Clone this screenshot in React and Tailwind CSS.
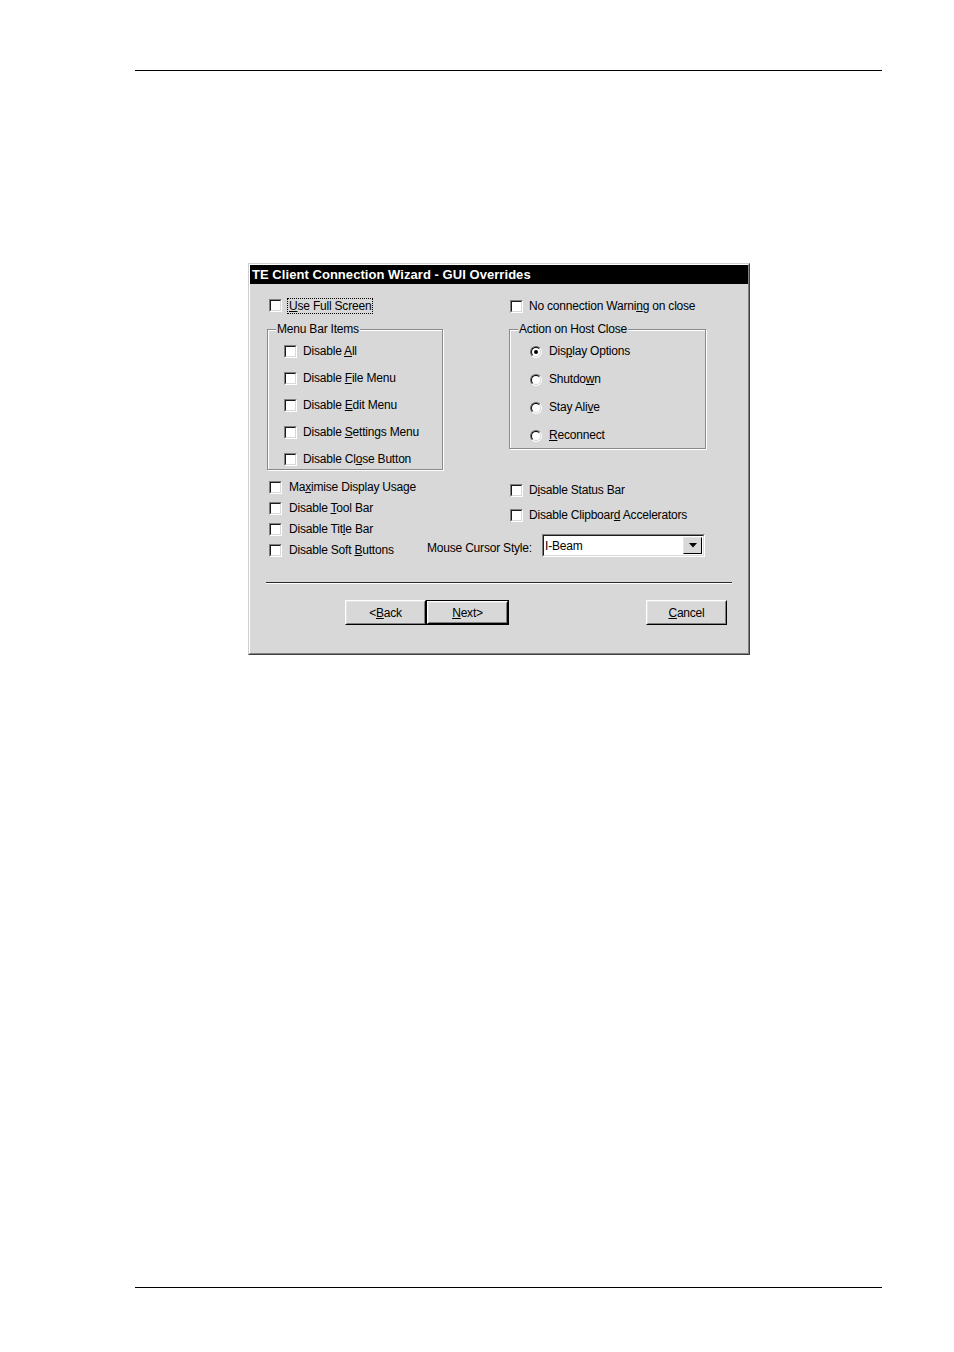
import React from "react";

// * small win95 style pieces
const M = ({ children }) => (
  <span className="underline underline-offset-[1px] decoration-1">{children}</span>
);

const Box = () => (
  <span className="block w-[13px] h-[13px] shrink-0 border border-t-[#808080] border-l-[#808080] border-r-white border-b-white">
    <span className="block w-full h-full border border-t-[#1a1a1a] border-l-[#1a1a1a] border-r-[#d8d8d8] border-b-[#d8d8d8] bg-white" />
  </span>
);

const Radio = ({ checked }) => (
  <span className="flex items-center justify-center w-[12px] h-[12px] shrink-0 rounded-full border border-t-[#6a6a6a] border-l-[#6a6a6a] border-r-white border-b-white">
    <span className="flex items-center justify-center w-full h-full rounded-full border border-t-[#000] border-l-[#000] border-r-[#d8d8d8] border-b-[#d8d8d8] bg-white">
      {checked && <span className="block w-[4px] h-[4px] rounded-full bg-black" />}
    </span>
  </span>
);

const Check = ({ children, gap = "ml-[7px]" }) => (
  <div className="flex items-center h-[13px]">
    <Box />
    <span className={`${gap} leading-[13px] whitespace-nowrap`}>{children}</span>
  </div>
);

const Option = ({ children, checked }) => (
  <div className="flex items-center h-[13px]">
    <Radio checked={checked} />
    <span className="ml-[7px] leading-[13px] whitespace-nowrap">{children}</span>
  </div>
);

const Group = ({ title, className, children }) => (
  <div
    className={`relative border border-[#8a8a8a] shadow-[inset_1px_1px_0_white,1px_1px_0_white] ${className}`}
  >
    <span className="absolute -top-[8px] left-[8px] px-px bg-[#d8d8d8] leading-[14px] whitespace-nowrap">
      {title}
    </span>
    {children}
  </div>
);

const Button = ({ children, isDefault, className = "" }) => (
  <div className={`h-[25px] ${isDefault ? "border border-black" : ""} ${className}`}>
    <div className="h-full border border-t-white border-l-white border-r-black border-b-black">
      <div className="h-full flex items-center justify-center border border-t-[#e4e4e4] border-l-[#e4e4e4] border-r-[#808080] border-b-[#808080]">
        <span className="leading-none">{children}</span>
      </div>
    </div>
  </div>
);

const App = () => {
  return (
    <div className="w-[954px] h-[1352px] bg-white pt-[70px] font-['Liberation_Sans',Arial,sans-serif] text-[12px] tracking-[-0.2px] text-black">
      {/* page rule top */}
      <div className="ml-[135px] w-[747px] h-px bg-black" />

      {/* dialog */}
      <div className="mt-[192px] ml-[248px] w-[502px] h-[392px] border border-t-[#cfcfcf] border-l-[#cfcfcf] border-r-[#404040] border-b-[#404040]">
        <div className="h-full flex flex-col border border-t-white border-l-white border-r-[#808080] border-b-[#808080]">
          {/* title */}
          <div className="h-[19px] shrink-0 bg-black flex items-center pl-[2px]">
            <span className="text-white font-bold text-[13px] tracking-[0.05px] leading-none whitespace-nowrap">
              TE Client Connection Wizard - GUI Overrides
            </span>
          </div>

          {/* body */}
          <div className="flex-1 bg-[#d8d8d8]">
            {/* top part */}
            <div className="flex items-start">
              <div className="ml-[17px] w-[176px]">
                <div className="mt-[15px] pl-[2px]">
                  <div className="flex items-center h-[13px]">
                    <Box />
                    <span className="ml-[5px] px-px border border-dotted border-black leading-[14px] whitespace-nowrap">
                      <M>U</M>se Full Screen
                    </span>
                  </div>
                </div>
                <Group title="Menu Bar Items" className="mt-[17px] h-[141px]">
                  <div className="pt-[15px] pl-[16px] flex flex-col gap-[14px]">
                    <Check gap="ml-[6px]">
                      Disable <M>A</M>ll
                    </Check>
                    <Check gap="ml-[6px]">
                      Disable <M>F</M>ile Menu
                    </Check>
                    <Check gap="ml-[6px]">
                      Disable <M>E</M>dit Menu
                    </Check>
                    <Check gap="ml-[6px]">
                      Disable <M>S</M>ettings Menu
                    </Check>
                    <Check gap="ml-[6px]">
                      Disable Cl<M>o</M>se Button
                    </Check>
                  </div>
                </Group>
              </div>

              <div className="ml-[66px] w-[197px]">
                <div className="mt-[16px] pl-[1px]">
                  <Check gap="ml-[6px]">
                    No connection Warni<M>n</M>g on close
                  </Check>
                </div>
                <Group title="Action on Host Close" className="mt-[16px] h-[120px]">
                  <div className="pt-[15px] pl-[20px] flex flex-col gap-[15px]">
                    <Option checked>
                      Dis<M>p</M>lay Options
                    </Option>
                    <Option>
                      Shutdo<M>w</M>n
                    </Option>
                    <Option>
                      Stay Ali<M>v</M>e
                    </Option>
                    <Option>
                      <M>R</M>econnect
                    </Option>
                  </div>
                </Group>
              </div>
            </div>

            {/* lower part */}
            <div className="flex items-start h-[112px]">
              <div className="ml-[19px] w-[158px] mt-[11px] flex flex-col gap-[8px]">
                <Check>
                  Ma<M>x</M>imise Display Usage
                </Check>
                <Check>
                  Disable <M>T</M>ool Bar
                </Check>
                <Check>
                  Disable Tit<M>l</M>e Bar
                </Check>
                <Check>
                  Disable Soft <M>B</M>uttons
                </Check>
              </div>
              <div className="w-[280px]">
                <div className="pl-[83px] mt-[14px] flex flex-col gap-[12px]">
                  <Check gap="ml-[6px]">
                    D<M>i</M>sable Status Bar
                  </Check>
                  <Check gap="ml-[6px]">
                    Disable Clipboar<M>d</M> Accelerators
                  </Check>
                </div>
                <div className="mt-[12px] flex items-center">
                  <span className="w-[115px] pt-[4px] whitespace-nowrap">Mouse Cursor Style:</span>
                  <div className="w-[163px] h-[23px] border border-t-[#808080] border-l-[#808080] border-r-white border-b-white">
                    <div className="h-full flex items-center justify-between bg-white border border-t-[#1a1a1a] border-l-[#1a1a1a] border-r-[#d8d8d8] border-b-[#d8d8d8] pl-px pr-px">
                      <span className="leading-none">I-Beam</span>
                      <div className="w-[19px] h-[17px] bg-[#d8d8d8] border border-t-[#e4e4e4] border-l-[#e4e4e4] border-r-black border-b-black flex items-center justify-center">
                        <svg width="8" height="5" viewBox="0 0 8 5">
                          <path d="M0 0 H8 L4 4.5 Z" fill="#000" />
                        </svg>
                      </div>
                    </div>
                  </div>
                </div>
              </div>
            </div>

            {/* separator */}
            <div className="ml-[16px] w-[466px] h-px bg-[#2a2a2a]" />
            <div className="ml-[16px] w-[466px] h-px bg-white" />

            {/* buttons */}
            <div className="mt-[16px] ml-[95px] flex">
              <Button className="w-[81px]">
                &lt;<M>B</M>ack
              </Button>
              <Button isDefault className="w-[83px]">
                <M>N</M>ext&gt;
              </Button>
              <Button className="w-[81px] ml-[137px]">
                <M>C</M>ancel
              </Button>
            </div>
          </div>
        </div>
      </div>

      {/* page rule bottom */}
      <div className="mt-[632px] ml-[135px] w-[747px] h-px bg-black" />
    </div>
  );
};

export default App;
